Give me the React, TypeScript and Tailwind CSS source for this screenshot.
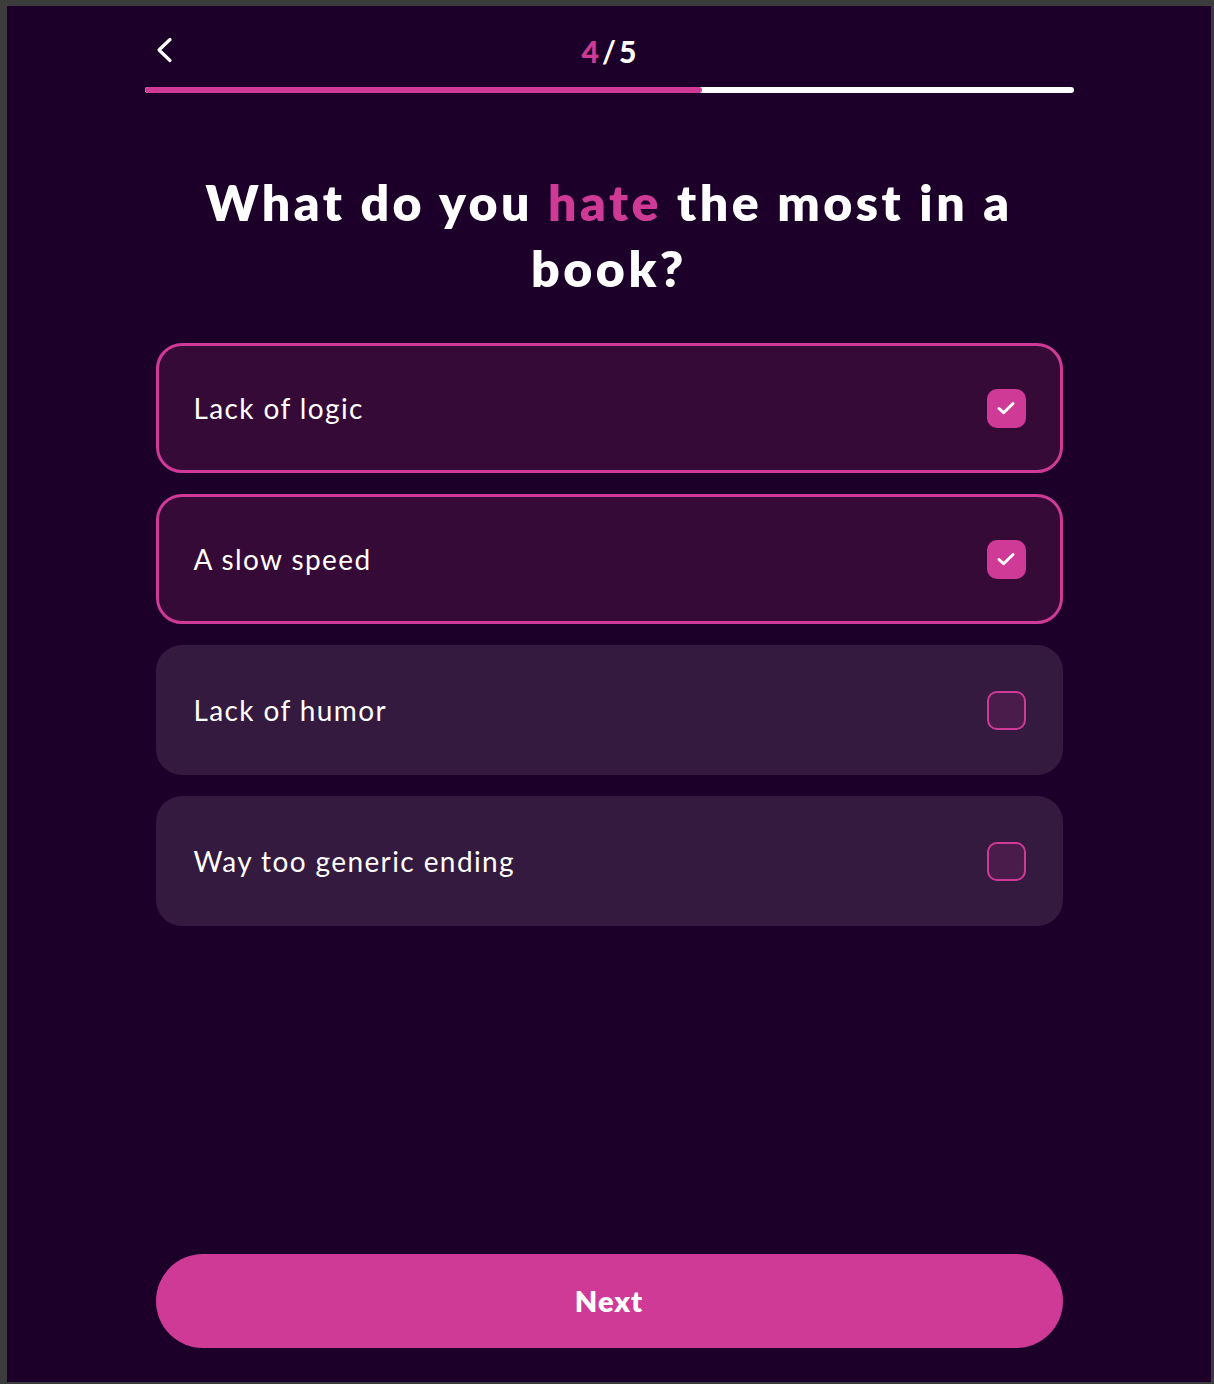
import React, { useState } from "react";

const options = [
  { label: "Lack of logic", checked: true },
  { label: "A slow speed", checked: true },
  { label: "Lack of humor", checked: false },
  { label: "Way too generic ending", checked: false },
];

function Check() {
  return (
    <svg width="24" height="24" viewBox="0 0 24 24" fill="none">
      <path d="M5 12.5l4.6 4.2L19 7.5" stroke="white" strokeWidth="3" strokeLinecap="round" strokeLinejoin="round" />
    </svg>
  );
}

export default function App() {
  const [items, setItems] = useState(options);
  return (
    <div
      className="w-full h-[1384px] bg-[#3c3c3c] pt-[6px] pl-[7px] pr-[3px] pb-[2px]"
      style={{ fontFamily: "Lato, 'Noto Sans', sans-serif" }}
    >
      <div className="h-full bg-[#1c0029] flex flex-col items-center pb-[34px]">
        <div className="w-[929px] pt-[31px]">
          <div className="relative h-[26px] flex items-center justify-center">
            <svg className="absolute left-[10px] top-0" width="18" height="26" viewBox="0 0 18 26" fill="none">
              <path d="M15 2.5L4 13l11 10.5" stroke="white" strokeWidth="3.2" strokeLinecap="round" strokeLinejoin="round" />
            </svg>
            <div className="text-[30px] font-black leading-none tracking-[3px] mt-[1px] pl-[3px]">
              <span className="text-[#d03a97]">4</span>
              <span className="text-white font-bold">/</span>
              <span className="text-white">5</span>
            </div>
          </div>
          <div className="mt-[24px] h-[6px] rounded-full bg-white overflow-hidden">
            <div className="h-full bg-[#d03a97] rounded-full w-[60%]" />
          </div>
        </div>

        <h1 className="mt-[76px] w-[900px] text-center text-white text-[50px] font-extrabold leading-[66px] tracking-[3.5px]">
          What do you <span className="text-[#d03a97]">hate</span> the most in a book?
        </h1>

        <div className="mt-[42px] w-[907px] flex flex-col gap-[21px]">
          {items.map((o, i) => (
            <button
              key={o.label}
              onClick={() =>
                setItems(items.map((it, j) => (j === i ? { ...it, checked: !it.checked } : it)))
              }
              className={
                o.checked
                  ? "h-[130px] rounded-[26px] border-[3px] border-[#d03a97] bg-[#350a37] flex items-center justify-between pl-[35px] pr-[34px] text-left"
                  : "h-[130px] rounded-[26px] border-[3px] border-transparent bg-[#331a3e] flex items-center justify-between pl-[35px] pr-[34px] text-left"
              }
            >
              <span className="text-white text-[28px] leading-none tracking-[1.4px]">{o.label}</span>
              {o.checked ? (
                <span className="w-[39px] h-[39px] rounded-[10px] bg-[#d03a97] flex items-center justify-center">
                  <Check />
                </span>
              ) : (
                <span className="w-[39px] h-[39px] rounded-[10px] border-2 border-[#d03a97] bg-[#4a1c4b]" />
              )}
            </button>
          ))}
        </div>

        <button className="mt-auto w-[907px] h-[94px] rounded-full bg-[#d03a97] text-white text-[29px] font-extrabold tracking-[1px]">
          Next
        </button>
      </div>
    </div>
  );
}
